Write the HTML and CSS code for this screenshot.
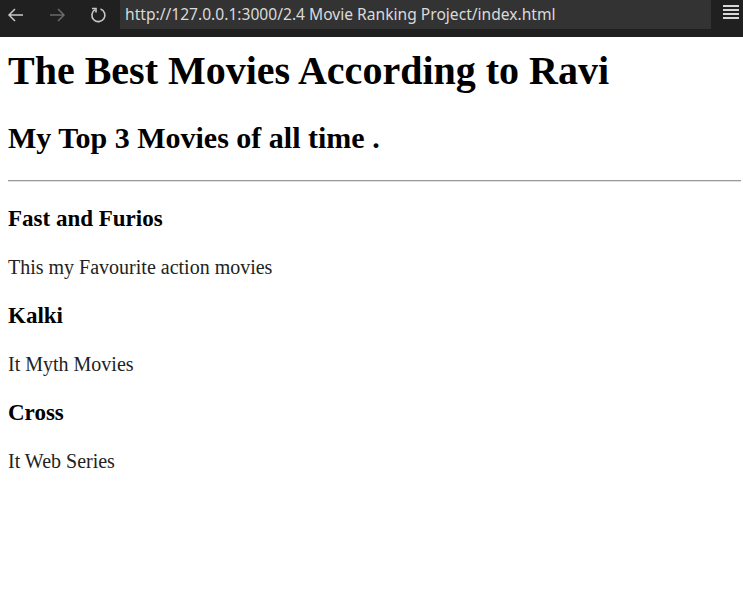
FILE: index.html
```html
<!DOCTYPE html>
<html lang="en">
<head>
<meta charset="utf-8">
<title>Movie Ranking</title>
<link rel="stylesheet" href="styles.css">
</head>
<body>
<div class="toolbar">
  <div class="nav">
    <svg class="nav-btn" width="20" height="20" viewBox="0 0 20 20"><path d="M17 10H3M9 4l-6 6 6 6" fill="none" stroke="#c8c8c8" stroke-width="1.5"/></svg>
    <svg class="nav-btn dim" width="20" height="20" viewBox="0 0 20 20"><path d="M3 10h14M11 4l6 6-6 6" fill="none" stroke="#6a6a6a" stroke-width="1.5"/></svg>
    <svg class="nav-btn" width="20" height="20" viewBox="0 0 20 20"><path d="M7 4.6A6.5 6.5 0 1 0 12.5 4" fill="none" stroke="#c8c8c8" stroke-width="1.6"/><path d="M4 3.5h4v4" fill="none" stroke="#c8c8c8" stroke-width="1.6"/></svg>
  </div>
  <div class="url">http://127.0.0.1:3000/2.4 Movie Ranking Project/index.html</div>
  <div class="menu"><span></span><span></span><span></span><span></span></div>
</div>
<main class="page">
  <h1 class="title">The Best Movies According to Ravi</h1>
  <h2 class="subtitle">My Top 3 Movies of all time .</h2>
  <hr class="rule">
  <h3 class="movie">Fast and Furios</h3>
  <p class="desc">This my Favourite action movies</p>
  <h3 class="movie">Kalki</h3>
  <p class="desc">It Myth Movies</p>
  <h3 class="movie">Cross</h3>
  <p class="desc">It Web Series</p>
</main>
</body>
</html>
```
FILE: styles.css
```css
html, body {
  margin: 0;
  padding: 0;
  background: #ffffff;
}
body {
  font-family: "Liberation Serif", "Times New Roman", serif;
  color: #000;
  overflow: hidden;
}
.toolbar {
  height: 37px;
  background: #202020;
  display: flex;
  align-items: flex-start;
}
.nav {
  display: flex;
  align-items: center;
  height: 29px;
  width: 120px;
  padding-left: 6px;
  box-sizing: border-box;
  gap: 21px;
}
.nav-btn {
  display: block;
  flex: none;
}
.url {
  width: 591px;
  height: 29px;
  background: #333333;
  color: #dadada;
  font-family: "Noto Sans", "Open Sans", sans-serif;
  font-size: 15.6px;
  line-height: 29px;
  padding-left: 5px;
  box-sizing: border-box;
  white-space: nowrap;
  overflow: hidden;
}
.menu {
  margin-left: 12px;
  margin-top: 5px;
  width: 16px;
  display: flex;
  flex-direction: column;
  gap: 2.3px;
}
.menu span {
  display: block;
  height: 1.7px;
  background: #d8d8d8;
}
.page {
  padding: 0 2px 0 8px;
}
.title {
  font-size: 40px;
  line-height: 46px;
  margin: 11px 0 0;
  font-weight: bold;
}
.subtitle {
  font-size: 30px;
  line-height: 35px;
  margin: 26px 0 0;
  font-weight: bold;
}
.rule {
  margin: 25px 0 0;
  border: none;
  border-top: 1px solid #9a9a9a;
  border-bottom: 1px solid #e0e0e0;
  height: 0;
}
.movie {
  font-size: 23px;
  line-height: 27px;
  margin: 23px 0 0;
  font-weight: bold;
}
.desc {
  font-size: 20px;
  line-height: 23px;
  margin: 24px 0 23px;
  color: #222;
}
.desc + .movie {
  margin-top: 0;
}
```
